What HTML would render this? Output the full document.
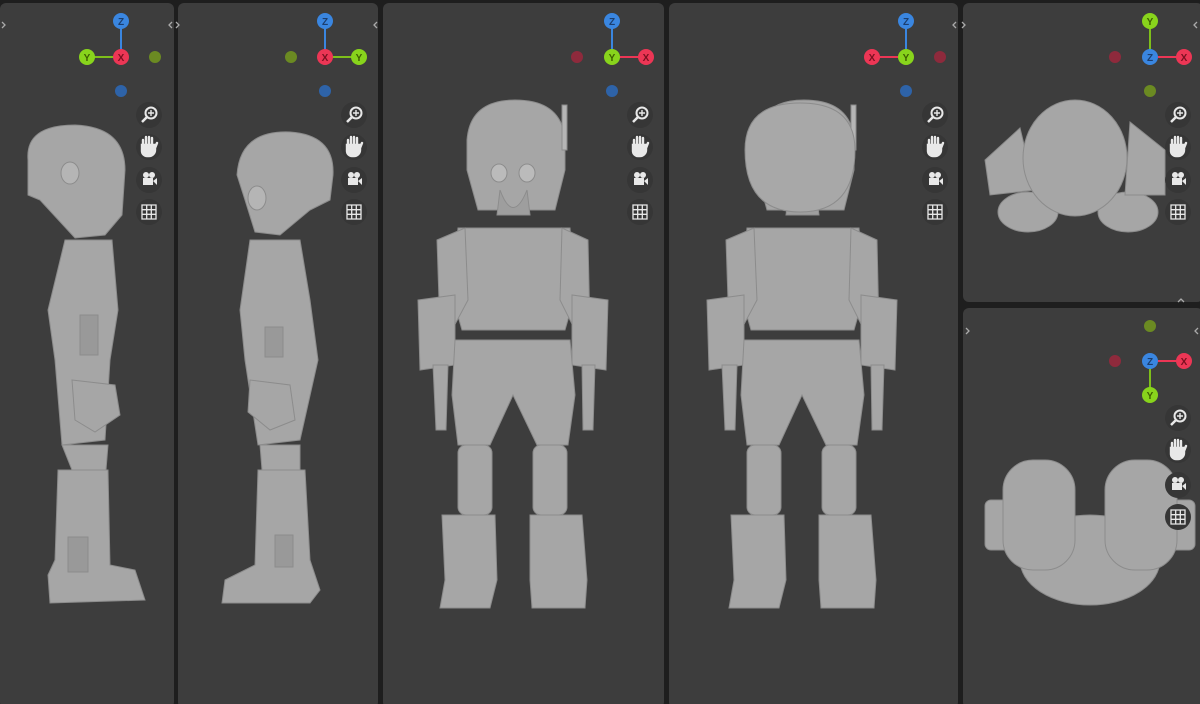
<!DOCTYPE html>
<html><head><style>
html,body{margin:0;padding:0;background:#1e1e1e;width:1200px;height:704px;overflow:hidden;font-family:"Liberation Sans",sans-serif}
</style></head><body>
<svg width="1200" height="704" viewBox="0 0 1200 704" xmlns="http://www.w3.org/2000/svg">
<defs>
<g id="zoom"><circle r="13" fill="#363636"/><circle cx="2" cy="-2" r="5.5" fill="none" stroke="#e8e8e8" stroke-width="2"/><path d="M-2 2 L-7 7" stroke="#e8e8e8" stroke-width="2.5"/><path d="M2 -5v6M-1 -2h6" stroke="#e8e8e8" stroke-width="1.4"/></g>
<g id="hand"><circle r="13" fill="#363636"/><path d="M-6 -2v-5M-3 -2v-8M0 -2v-8M3 -2v-7M6 1l2-5M-7 -2h13v5a6 6 0 0 1-6 6h-2a5 5 0 0 1-5-5z" stroke="#e8e8e8" stroke-width="2.4" fill="#e8e8e8" stroke-linecap="round"/></g>
<g id="cam"><circle r="13" fill="#363636"/><circle cx="-3" cy="-5" r="3" fill="#e8e8e8"/><circle cx="3" cy="-5" r="3" fill="#e8e8e8"/><rect x="-6" y="-2" width="10" height="7" fill="#e8e8e8"/><path d="M4 1l4-3v7z" fill="#e8e8e8"/></g>
<g id="grid"><circle r="13" fill="#363636"/><path d="M-7 -7h14v14h-14zM-7 -2.3h14M-7 2.3h14M-2.3 -7v14M2.3 -7v14" stroke="#e8e8e8" stroke-width="1.3" fill="none"/></g>
<g id="figF" fill="#a6a6a6" stroke="#8c8c8c" stroke-width="1">
<path d="M467 140 Q470 100 515 100 Q562 100 565 140 L565 170 L555 210 L478 210 L467 170Z"/>
<rect x="562" y="105" width="5" height="45" fill="#b5b5b5"/>
<ellipse cx="499" cy="173" rx="8" ry="9" fill="#bbb"/><ellipse cx="527" cy="173" rx="8" ry="9" fill="#bbb"/>
<path d="M500 190 Q513 225 527 190 L530 215 L497 215Z" fill="#9e9e9e"/>
<path d="M458 228 L570 228 L575 295 L565 330 L462 330 L452 295Z"/>
<path d="M437 240 L465 228 L468 300 L452 330 L440 330Z"/>
<path d="M588 240 L562 228 L560 300 L575 330 L590 330Z"/>
<path d="M418 300 L455 295 L455 365 L420 370Z"/>
<path d="M608 300 L572 295 L572 365 L606 370Z"/>
<path d="M433 365 L448 365 L446 430 L436 430Z"/>
<path d="M582 365 L595 365 L593 430 L583 430Z"/>
<path d="M455 340 L570 340 L575 395 L568 445 L537 445 L513 395 L490 445 L458 445 L452 395Z"/>
<rect x="458" y="445" width="34" height="70" rx="8"/>
<rect x="533" y="445" width="34" height="70" rx="8"/>
<path d="M442 515 L495 515 L497 580 L490 608 L440 608 L445 580Z"/>
<path d="M530 515 L582 515 L587 580 L585 608 L532 608 L530 580Z"/>
</g>
</defs>
<rect x="0" y="3" width="174" height="705" rx="6" fill="#3d3d3d"/>
<rect x="178" y="3" width="200" height="705" rx="6" fill="#3d3d3d"/>
<rect x="383" y="3" width="281" height="705" rx="6" fill="#3d3d3d"/>
<rect x="669" y="3" width="289" height="705" rx="6" fill="#3d3d3d"/>
<rect x="963" y="3" width="240" height="299" rx="6" fill="#3d3d3d"/>
<rect x="963" y="308" width="240" height="400" rx="6" fill="#3d3d3d"/>

<g fill="#a6a6a6" stroke="#8c8c8c" stroke-width="1">
<path d="M28 160 Q25 125 75 125 Q125 127 125 170 L122 215 L105 235 L75 238 L40 200 L28 195Z"/>
<ellipse cx="70" cy="173" rx="9" ry="11" fill="#b5b5b5"/>
<path d="M65 240 L112 240 L118 310 L110 360 L105 440 L62 445 L55 360 L48 310Z"/>
<rect x="80" y="315" width="18" height="40" fill="#999"/>
<path d="M72 380 L115 385 L120 415 L95 432 L75 420Z"/>
<path d="M62 445 L108 445 L106 470 L72 470Z"/>
<path d="M58 470 L108 470 L110 565 L135 570 L145 600 L50 603 L48 575 L55 560Z"/>
<rect x="68" y="537" width="20" height="35" fill="#999"/>
</g>
<g fill="#a6a6a6" stroke="#8c8c8c" stroke-width="1">
<path d="M237 175 Q240 130 290 132 Q335 135 333 175 L330 200 L310 210 L280 235 L255 232 L245 200Z"/>
<ellipse cx="257" cy="198" rx="9" ry="12" fill="#b5b5b5"/>
<path d="M250 240 L300 240 L310 300 L318 360 L300 440 L258 445 L245 360 L240 310Z"/>
<rect x="265" y="327" width="18" height="30" fill="#999"/>
<path d="M250 380 L290 385 L295 420 L270 430 L248 412Z"/>
<path d="M260 445 L300 445 L300 470 L262 470Z"/>
<path d="M258 470 L305 470 L310 560 L320 590 L310 603 L222 603 L225 580 L255 565Z"/>
<rect x="275" y="535" width="18" height="32" fill="#999"/>
</g>
<use href="#figF"/>
<g transform="translate(289,0)"><use href="#figF"/></g>
<path d="M745 150 Q745 103 800 103 Q855 103 855 150 Q855 212 800 212 Q745 212 745 150Z" fill="#a8a8a8" stroke="#8c8c8c"/>
<g fill="#a6a6a6" stroke="#8c8c8c" stroke-width="1">
<ellipse cx="1028" cy="212" rx="30" ry="20"/><ellipse cx="1128" cy="212" rx="30" ry="20"/>
<path d="M985 160 L1020 128 L1035 190 L990 195Z"/><path d="M1165 150 L1130 122 L1125 195 L1165 195Z"/>
<ellipse cx="1075" cy="158" rx="52" ry="58"/>
</g>
<g fill="#a6a6a6" stroke="#8c8c8c" stroke-width="1">
<ellipse cx="1090" cy="560" rx="70" ry="45"/>
<rect x="985" y="500" width="30" height="50" rx="6"/><rect x="1165" y="500" width="30" height="50" rx="6"/>
<rect x="1003" y="460" width="72" height="110" rx="30"/>
<rect x="1105" y="460" width="72" height="110" rx="30"/>
</g>

<g font-size="10" text-anchor="middle" font-weight="bold">
<line x1="121" y1="21" x2="121" y2="57" stroke="#3a86e0" stroke-width="2"/><line x1="87" y1="57" x2="121" y2="57" stroke="#7ebf1a" stroke-width="2"/>
<circle cx="155" cy="57" r="6" fill="#6b8a22"/><circle cx="121" cy="91" r="6" fill="#2e63a8"/>
<circle cx="121" cy="21" r="8" fill="#3a86e0"/><text x="121" y="25" fill="#1c3e6e">Z</text>
<circle cx="87" cy="57" r="8" fill="#88d41c"/><text x="87" y="61" fill="#3d6000">Y</text>
<circle cx="121" cy="57" r="8" fill="#ec3655"/><text x="121" y="61" fill="#7a1020">X</text>
<line x1="325" y1="21" x2="325" y2="57" stroke="#3a86e0" stroke-width="2"/><line x1="325" y1="57" x2="359" y2="57" stroke="#7ebf1a" stroke-width="2"/>
<circle cx="291" cy="57" r="6" fill="#6b8a22"/><circle cx="325" cy="91" r="6" fill="#2e63a8"/>
<circle cx="325" cy="21" r="8" fill="#3a86e0"/><text x="325" y="25" fill="#1c3e6e">Z</text>
<circle cx="359" cy="57" r="8" fill="#88d41c"/><text x="359" y="61" fill="#3d6000">Y</text>
<circle cx="325" cy="57" r="8" fill="#ec3655"/><text x="325" y="61" fill="#7a1020">X</text>
<line x1="612" y1="21" x2="612" y2="57" stroke="#3a86e0" stroke-width="2"/><line x1="612" y1="57" x2="646" y2="57" stroke="#ec3655" stroke-width="2"/>
<circle cx="577" cy="57" r="6" fill="#8e2a3c"/><circle cx="612" cy="91" r="6" fill="#2e63a8"/>
<circle cx="612" cy="21" r="8" fill="#3a86e0"/><text x="612" y="25" fill="#1c3e6e">Z</text>
<circle cx="646" cy="57" r="8" fill="#ec3655"/><text x="646" y="61" fill="#7a1020">X</text>
<circle cx="612" cy="57" r="8" fill="#88d41c"/><text x="612" y="61" fill="#3d6000">Y</text>
<line x1="906" y1="21" x2="906" y2="57" stroke="#3a86e0" stroke-width="2"/><line x1="872" y1="57" x2="906" y2="57" stroke="#ec3655" stroke-width="2"/>
<circle cx="940" cy="57" r="6" fill="#8e2a3c"/><circle cx="906" cy="91" r="6" fill="#2e63a8"/>
<circle cx="906" cy="21" r="8" fill="#3a86e0"/><text x="906" y="25" fill="#1c3e6e">Z</text>
<circle cx="872" cy="57" r="8" fill="#ec3655"/><text x="872" y="61" fill="#7a1020">X</text>
<circle cx="906" cy="57" r="8" fill="#88d41c"/><text x="906" y="61" fill="#3d6000">Y</text>
<line x1="1150" y1="21" x2="1150" y2="57" stroke="#7ebf1a" stroke-width="2"/><line x1="1150" y1="57" x2="1184" y2="57" stroke="#ec3655" stroke-width="2"/>
<circle cx="1115" cy="57" r="6" fill="#8e2a3c"/><circle cx="1150" cy="91" r="6" fill="#6b8a22"/>
<circle cx="1150" cy="21" r="8" fill="#88d41c"/><text x="1150" y="25" fill="#3d6000">Y</text>
<circle cx="1184" cy="57" r="8" fill="#ec3655"/><text x="1184" y="61" fill="#7a1020">X</text>
<circle cx="1150" cy="57" r="8" fill="#3a86e0"/><text x="1150" y="61" fill="#1c3e6e">Z</text>
<line x1="1150" y1="361" x2="1150" y2="395" stroke="#7ebf1a" stroke-width="2"/><line x1="1150" y1="361" x2="1184" y2="361" stroke="#ec3655" stroke-width="2"/>
<circle cx="1150" cy="326" r="6" fill="#6b8a22"/><circle cx="1115" cy="361" r="6" fill="#8e2a3c"/>
<circle cx="1150" cy="395" r="8" fill="#88d41c"/><text x="1150" y="399" fill="#3d6000">Y</text>
<circle cx="1184" cy="361" r="8" fill="#ec3655"/><text x="1184" y="365" fill="#7a1020">X</text>
<circle cx="1150" cy="361" r="8" fill="#3a86e0"/><text x="1150" y="365" fill="#1c3e6e">Z</text>
</g>

<use href="#zoom" x="149" y="115"/><use href="#hand" x="149" y="147"/><use href="#cam" x="149" y="180"/><use href="#grid" x="149" y="212"/>
<use href="#zoom" x="354" y="115"/><use href="#hand" x="354" y="147"/><use href="#cam" x="354" y="180"/><use href="#grid" x="354" y="212"/>
<use href="#zoom" x="640" y="115"/><use href="#hand" x="640" y="147"/><use href="#cam" x="640" y="180"/><use href="#grid" x="640" y="212"/>
<use href="#zoom" x="935" y="115"/><use href="#hand" x="935" y="147"/><use href="#cam" x="935" y="180"/><use href="#grid" x="935" y="212"/>
<use href="#zoom" x="1178" y="115"/><use href="#hand" x="1178" y="147"/><use href="#cam" x="1178" y="180"/><use href="#grid" x="1178" y="212"/>
<use href="#zoom" x="1178" y="418"/><use href="#hand" x="1178" y="450"/><use href="#cam" x="1178" y="485"/><use href="#grid" x="1178" y="517"/>

<g fill="none" stroke="#aaa" stroke-width="1.3">
<path d="M2 22l3 3-3 3"/><path d="M172 22l-3 3 3 3M176 22l3 3-3 3"/>
<path d="M377 22l-3 3 3 3"/><path d="M956 22l-3 3 3 3M962 22l3 3-3 3"/>
<path d="M1197 22l-3 3 3 3"/><path d="M966 328l3 3-3 3"/><path d="M1178 302l3-3 3 3"/><path d="M1198 328l-3 3 3 3"/>
</g>
</svg>
</body></html>
